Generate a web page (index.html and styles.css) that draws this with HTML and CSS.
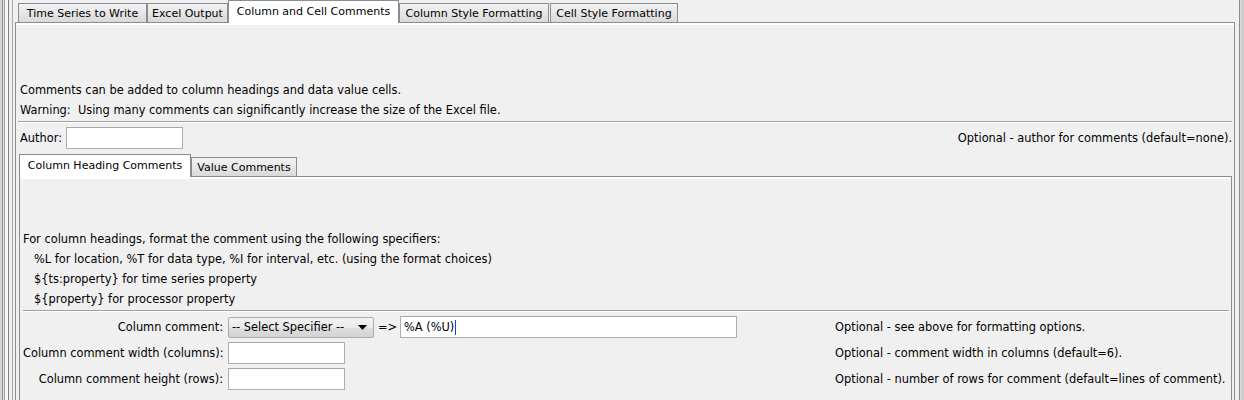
FILE: index.html
```html
<!DOCTYPE html>
<html>
<head>
<meta charset="utf-8">
<title>Column and Cell Comments</title>
<link rel="stylesheet" href="styles.css">
</head>
<body>
<div class="window">
  <div class="lstrip"></div>
  <div class="main">
    <div class="tabs outer-tabs">
      <div class="tab w-ts">Time Series to Write</div>
      <div class="tab w-excel">Excel Output</div>
      <div class="tab tab-sel w-comments">Column and Cell Comments</div>
      <div class="tab w-colstyle">Column Style Formatting</div>
      <div class="tab w-cellstyle">Cell Style Formatting</div>
    </div>
    <div class="panel">
      <div class="line">Comments can be added to column headings and data value cells.</div>
      <div class="line pre">Warning:  Using many comments can significantly increase the size of the Excel file.</div>
      <div class="sep"></div>
      <div class="author-row">
        <span class="author-label">Author:</span>
        <span class="field author-field"></span>
        <span class="help-right">Optional - author for comments (default=none).</span>
      </div>
      <div class="tabs inner-tabs">
        <div class="tab tab-sel w-heading">Column Heading Comments</div>
        <div class="tab w-value">Value Comments</div>
      </div>
      <div class="inner-panel">
        <div class="line">For column headings, format the comment using the following specifiers:</div>
        <div class="line indent">%L for location, %T for data type, %I for interval, etc. (using the format choices)</div>
        <div class="line indent">${ts:property} for time series property</div>
        <div class="line indent">${property} for processor property</div>
        <div class="sep inner-sep"></div>
        <div class="form">
          <div class="label">Column comment:</div>
          <div class="ctrl">
            <div class="combo">
              <span class="combo-text">-- Select Specifier --</span>
              <svg class="combo-arrow" width="9" height="5" viewBox="0 0 9 5"><path d="M0 0H9L4.5 5Z" fill="#000"/></svg>
            </div>
            <span class="arrow-text">=&gt;</span>
            <div class="field wide-field">%A (%U)<span class="caret"></span></div>
          </div>
          <div class="help">Optional - see above for formatting options.</div>

          <div class="label">Column comment width (columns):</div>
          <div class="ctrl"><div class="field small-field"></div></div>
          <div class="help">Optional - comment width in columns (default=6).</div>

          <div class="label">Column comment height (rows):</div>
          <div class="ctrl"><div class="field small-field"></div></div>
          <div class="help">Optional - number of rows for comment (default=lines of comment).</div>
        </div>
      </div>
    </div>
  </div>
  <div class="rstrip"></div>
</div>
</body>
</html>
```
FILE: styles.css
```css
html, body {
  margin: 0;
  padding: 0;
}
body {
  background: #f0f0f0;
  font-family: "DejaVu Sans", "Liberation Sans", sans-serif;
  font-size: 11.4px;
  color: #000;
}
.window {
  display: flex;
  width: 1244px;
  height: 400px;
  overflow: hidden;
}
.lstrip {
  flex: none;
  width: 13px;
  background: linear-gradient(to right,
    #d6d6d6 0px, #d6d6d6 2px,
    #8c8c8c 2px, #8c8c8c 3px,
    #e4e4e4 3px, #e4e4e4 4px,
    #9c9c9c 4px, #9c9c9c 5px,
    #f6f6f6 5px, #f6f6f6 8px,
    #808080 8px, #808080 9px,
    #f0f0f0 9px, #f0f0f0 12px,
    #a8a8a8 12px, #a8a8a8 13px);
}
.rstrip {
  flex: none;
  width: 9px;
  background: linear-gradient(to right,
    #f0f0f0 0px, #f0f0f0 4px,
    #8c8c8c 4px, #8c8c8c 5px,
    #e8e8e8 5px, #c4c4c4 7px, #d8d8d8 9px);
}
.main {
  flex: none;
  width: 1222px;
  height: 440px;
  box-sizing: border-box;
  padding-left: 2px;
  display: flex;
  flex-direction: column;
}
.tabs {
  display: flex;
  align-items: flex-end;
  height: 22px;
  flex: none;
}
.outer-tabs {
  padding-left: 3px;
}
.tab {
  height: 19px;
  box-sizing: border-box;
  border: 1px solid #898c95;
  border-bottom: none;
  padding: 0;
  text-align: center;
  font-size: 11px;
  line-height: 20px;
  background: linear-gradient(#f2f2f2, #e6e6e6 50%, #d9d9d9);
  white-space: nowrap;
  overflow: hidden;
}
.tab-sel {
  height: 23px;
  margin-bottom: -1px;
  background: #fff;
  position: relative;
  z-index: 1;
  line-height: 21px;
}
.w-ts { width: 129px; }
.w-excel { width: 81px; }
.w-comments { width: 171px; }
.w-colstyle { width: 150px; }
.w-cellstyle { width: 128px; margin-left: 1px; }
.w-heading { width: 172px; }
.w-value { width: 106px; }
.panel {
  flex: 1;
  border: 1px solid #898c95;
  box-shadow: inset 0 2px 0 #fff;
  padding: 57px 2px 0 4px;
  display: flex;
  flex-direction: column;
}
.line {
  height: 20px;
  line-height: 20px;
  white-space: nowrap;
}
.pre {
  white-space: pre;
}
.sep {
  height: 1px;
  background: #a0a0a0;
  border-bottom: 1px solid #fff;
  margin: 1px 0 0 -2px;
}
.author-row {
  display: flex;
  align-items: center;
  height: 22px;
  margin-top: 4px;
}
.author-label {
  width: 46px;
}
.help-right {
  margin-left: auto;
}
.field {
  box-sizing: border-box;
  height: 22px;
  background: #fff;
  border: 1px solid #abadb3;
  border-top-color: #a3a7ae;
  display: flex;
  align-items: center;
  padding-left: 3px;
  white-space: nowrap;
}
.author-field {
  width: 117px;
}
.inner-tabs {
  margin-top: 5px;
  margin-left: -1px;
}
.inner-panel {
  flex: 1;
  margin: 0 0 0 -1px;
  border: 1px solid #898c95;
  box-shadow: inset 0 2px 0 #fff;
  padding: 52px 2px 0 3px;
  display: flex;
  flex-direction: column;
}
.indent {
  padding-left: 11px;
}
.inner-sep {
  margin: 1px 0 0 0;
}
.form {
  display: grid;
  grid-template-columns: 200px 602px auto;
  grid-auto-rows: 22px;
  column-gap: 5px;
  row-gap: 4px;
  margin-top: 4px;
  align-items: center;
}
.label {
  text-align: right;
  white-space: nowrap;
}
.ctrl {
  display: flex;
  align-items: center;
  height: 22px;
}
.help {
  white-space: nowrap;
}
.combo {
  box-sizing: border-box;
  width: 146px;
  height: 21px;
  border: 1px solid #acacac;
  border-radius: 2px;
  background: linear-gradient(#f2f2f2, #ebebeb 50%, #dddddd 51%, #d4d4d4);
  display: flex;
  align-items: center;
  padding: 0 6px 0 3px;
}
.combo-arrow {
  margin-left: auto;
  flex: none;
}
.arrow-text {
  width: 22px;
  margin-left: 4px;
  flex: none;
}
.wide-field {
  width: 337px;
}
.caret {
  display: inline-block;
  width: 1px;
  height: 15px;
  background: #1a3fd6;
  margin-left: 1px;
}
.small-field {
  width: 117px;
}
```
